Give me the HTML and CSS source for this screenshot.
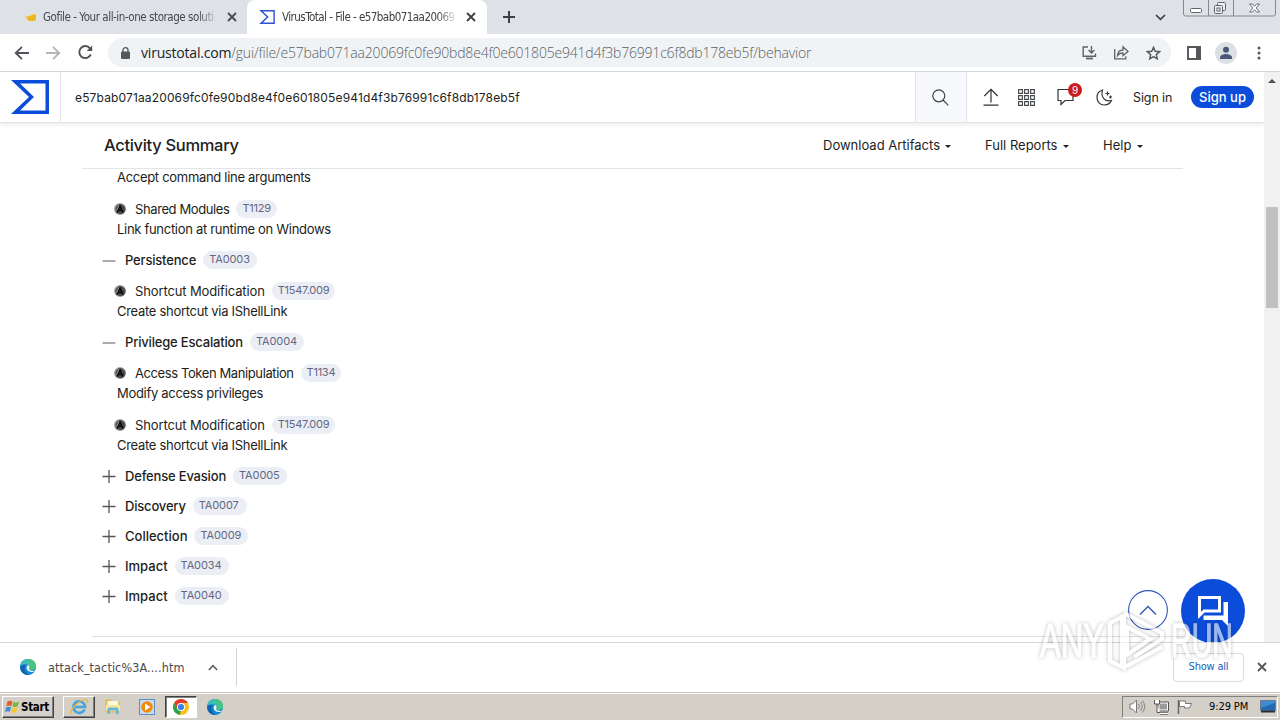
FILE: index.html
```html
<!DOCTYPE html>
<html lang="en">
<head>
<meta charset="utf-8">
<title>VirusTotal - File</title>
<link rel="stylesheet" href="styles.css">
</head>
<body>
<svg width="0" height="0" class="defs">
  <symbol id="sigma" viewBox="0 0 38 34"><path d="M0 0H38V34H0L18 17ZM9 3.5L23 17L9 30.5H34.5V3.5Z" fill="currentColor" fill-rule="evenodd"/></symbol>
  <symbol id="attck" viewBox="0 0 12 12"><circle cx="6" cy="6" r="6" fill="#a5a5a5"/><circle cx="6.400" cy="6.200" r="5" fill="#4c4c4c"/><path d="M3 9.5L6 3l3 6.5M4.5 7.5h3.500" fill="none" stroke="#0b0b0b" stroke-width="1.700"/><path d="M2.400 8L5 2.500" stroke="#b5b5b5" stroke-width=".8"/></symbol>
  <symbol id="plus" viewBox="0 0 14 14"><path d="M.5 7.500h13M7 1v13" stroke="#555" stroke-width="1.300"/></symbol>
  <symbol id="minus" viewBox="0 0 14 14"><path d="M.5 8h13" stroke="#888" stroke-width="1.400"/></symbol>
  <symbol id="x" viewBox="0 0 10 10"><path d="M1 1l8 8M9 1L1 9" stroke="currentColor" stroke-width="1.800"/></symbol>
  <symbol id="edge" viewBox="0 0 16 16"><circle cx="8" cy="8" r="8" fill="#1687d2"/><path d="M.3 7C1 2.500 4 0 8 0c5 0 8 3.700 8 7 0 3-2.500 4-4.500 4-1.500 0-2.500-.6-2.200-1.300.8-1 .6-3.700-2.500-4.200C4 5 1.500 6 .3 7Z" fill="#3bbfb4"/><path d="M7 0c5-.5 9 3 9 7 0 3-2.500 4-4.500 4-1.500 0-2.500-.6-2.200-1.300 1.500-2.500.5-6.200-2.300-9.700Z" fill="#52c46f" opacity=".75"/><path d="M6 6.500C3.500 8.500 4.500 14 9 15.900 4 16.500 0 13 .2 8 1.500 5.500 4.500 5.200 6 6.500Z" fill="#1264b0"/><path d="M8.300 6c-2.800 1-2.400 6 2.700 7 2 .3 3.500-.5 4.400-1.200-1.800.3-6.400.2-6.400-1.800 1-1 .6-3-.7-4Z" fill="#eaf7fb"/></symbol>
</svg>
<div class="screen">
  <div class="tabstrip">
    <div class="tab">
      <svg class="gofile" width="12" height="10" viewBox="0 0 12 10"><path d="M1 5L10 2l1 .8V8L9 9H4L2 7Z" fill="#edb71f"/><path d="M0 4.500l2-.4M5 3.200l5-1.500" stroke="#f5d77a"/></svg>
      <span class="tabtitle t1">Gofile - Your all-in-one storage soluti</span>
      <svg width="10" height="10" class="tabx"><use href="#x"/></svg>
    </div>
    <div class="tab active">
      <svg width="16" height="14" class="vt"><use href="#sigma"/></svg>
      <span class="tabtitle t2">VirusTotal - File - e57bab071aa20069</span>
      <svg width="10" height="10" class="tabx"><use href="#x"/></svg>
    </div>
    <svg class="newtab" width="12" height="12" viewBox="0 0 12 12"><path d="M0 6h12M6 0v12" stroke="#3c4043" stroke-width="2"/></svg>
    <svg class="tabdown" width="11" height="7" viewBox="0 0 11 7"><path d="M1 1l4.500 4.300L10 1" fill="none" stroke="#3c4043" stroke-width="1.700"/></svg>
    <svg class="winbtns" width="93" height="17" viewBox="0 0 93 17"><path d="M.5 0V14q0 2 2 2H90.500q2 0 2-2V0M25.500 0V16M50.500 0V16" fill="none" stroke="#85898f"/><rect x="7.500" y="8.500" width="11" height="4" rx="1" fill="#fff" stroke="#60646a"/><g fill="#eef0f3" stroke="#60646a"><rect x="34.500" y="2.500" width="8" height="8" rx="1"/><rect x="31.500" y="5.500" width="8" height="8" rx="1"/><rect x="34" y="8" width="3" height="3"/></g><path d="M66.500 4h3l2 2.300 2-2.300h3l-3.300 4 3.300 4h-3l-2-2.300-2 2.300h-3l3.300-4Z" fill="#fff" stroke="#60646a" stroke-width=".9"/></svg>
  </div>
  <div class="toolbar">
    <svg class="back" width="15" height="14" viewBox="0 0 15 14"><path d="M15 7H1.500M8 .8L1.700 7 8 13.200" fill="none" stroke="#4f5357" stroke-width="1.800"/></svg>
    <svg class="fwd" width="15" height="14" viewBox="0 0 15 14"><path d="M0 7h13.500M7 .8L13.300 7 7 13.200" fill="none" stroke="#b4b6b9" stroke-width="1.800"/></svg>
    <svg class="reload" width="15" height="15" viewBox="0 0 15 15"><path d="M12.800 9.500A6 6 0 1 1 12 3.300L13 4.600" fill="none" stroke="#4f5357" stroke-width="1.900"/><path d="M14.200.5V6H8.700Z" fill="#4f5357"/></svg>
    <div class="omnibox">
      <svg class="lock" width="9" height="12" viewBox="0 0 9 12"><rect y="4.500" width="9" height="7.500" rx="1" fill="#54585c"/><path d="M2 5V3a2.500 2.300 0 0 1 5 0V5" fill="none" stroke="#54585c" stroke-width="1.300"/></svg>
      <span class="url"><b>virustotal.com</b>/gui/file/e57bab071aa20069fc0fe90bd8e4f0e601805e941d4f3b76991c6f8db178eb5f/behavior</span>
      <svg class="install" width="15" height="14" viewBox="0 0 15 14"><g fill="none" stroke="#5f6368" stroke-width="1.400"><path d="M6 1H1.200v9.300h12.300V7.500M9.500 0v6.500M6.500 4l3 3 3-3"/></g><path d="M4 12.500h7" stroke="#5f6368" stroke-width="1.800"/></svg>
      <svg class="share" width="15" height="15" viewBox="0 0 15 15"><g fill="none" stroke="#5f6368" stroke-width="1.300"><path d="M.7 4v9.800h11.100v-2.500M3.500 10.500c.4-4 2.500-5.500 5.500-5.500V1.800L14 6.500 9 10.700V8C6.500 8 4.800 8.700 3.500 10.500Z"/></g></svg>
      <svg class="star" width="15" height="14" viewBox="0 0 15 14"><path d="M7.500 1.300l1.700 4 4.400.4-3.300 2.900 1 4.300-3.800-2.300-3.800 2.300 1-4.300L1.400 5.700l4.400-.4Z" fill="none" stroke="#54585c" stroke-width="1.400"/></svg>
    </div>
    <svg class="side" width="14" height="14" viewBox="0 0 14 14"><path d="M1 1h12v12H1Z" fill="none" stroke="#54585c" stroke-width="1.900"/><path d="M9 0h5v14H9Z" fill="#54585c"/></svg>
    <svg class="avatar" width="22" height="22" viewBox="0 0 22 22"><circle cx="11" cy="11" r="11" fill="#dce0e5"/><circle cx="11" cy="7.800" r="3" fill="#485875"/><path d="M5 17v-1.500c0-2.500 4-3.500 6-3.500s6 1 6 3.500V17Z" fill="#485875"/></svg>
    <svg class="dots" width="4" height="14" viewBox="0 0 4 14"><g fill="#54585c"><circle cx="2" cy="2" r="1.500"/><circle cx="2" cy="7" r="1.500"/><circle cx="2" cy="12" r="1.500"/></g></svg>
  </div>
  <div class="viewport">
    <div class="page">
      <div class="vthead">
        <div class="logo"><svg width="38" height="34" viewBox="0 0 38 34"><use href="#sigma"/></svg></div>
        <div class="query">e57bab071aa20069fc0fe90bd8e4f0e601805e941d4f3b76991c6f8db178eb5f</div>
        <div class="search"><svg width="17" height="17" viewBox="0 0 17 17"><circle cx="6.800" cy="6.800" r="6" fill="none" stroke="#3f4245" stroke-width="1.200"/><path d="M11 11l5.300 5.300" stroke="#3f4245" stroke-width="1.200"/></svg></div>
        <svg class="upload" width="16" height="18" viewBox="0 0 16 18"><path d="M8 14.500V1.500M1.300 8L8 1.300 14.700 8M.5 17.200h15" fill="none" stroke="#2f3235" stroke-width="1.200"/></svg>
        <svg class="grid" width="17" height="17" viewBox="0 0 17 17"><g fill="none" stroke="#44474a" stroke-width="1.100"><path d="M.6.600h3.800v3.800H.6ZM6.600.600h3.800v3.800H6.600ZM12.600.600h3.800v3.800h-3.800ZM.6 6.600h3.800v3.800H.6ZM6.600 6.600h3.800v3.800H6.600ZM12.600 6.600h3.800v3.800h-3.800ZM.6 12.600h3.800v3.800H.6ZM6.600 12.600h3.800v3.800H6.600ZM12.600 12.600h3.800v3.800h-3.800Z"/></g></svg>
        <div class="chat"><svg width="18" height="18" viewBox="0 0 18 18"><path d="M1 1.500h15v11H8L4 16.500v-4H1Z" fill="none" stroke="#333639" stroke-width="1.200"/></svg><span class="count">9</span></div>
        <svg class="moon" width="17" height="17" viewBox="0 0 17 17"><path d="M6.500 1C3 2 1 4.800 1 8.500 1 13 4 16 8.200 16c3.300 0 6-1.500 7.200-4.500C9 13.500 4.500 8 6.500 1Z" fill="none" stroke="#333639" stroke-width="1.200"/><path d="M11.500 2.500v4M9.500 4.500h4M14.500 6.500v3M13 8h3" stroke="#333639" stroke-width="1.200"/></svg>
        <span class="signin">Sign in</span>
        <span class="signup">Sign up</span>
      </div>
      <div class="summary">
        <span class="title">Activity Summary</span>
        <span class="menu m1">Download Artifacts</span><i class="caret"></i>
        <span class="menu m2">Full Reports</span><i class="caret"></i>
        <span class="menu m3">Help</span><i class="caret"></i>
      </div>
      <div class="list">
        <div class="desc">Accept command line arguments</div>
        <div class="tech gap"><svg width="12" height="12"><use href="#attck"/></svg><span class="tight">Shared Modules</span><em>T1129</em></div>
        <div class="desc">Link function at runtime on Windows</div>
        <div class="tactic after"><svg width="14" height="14"><use href="#minus"/></svg><span>Persistence</span><em>TA0003</em></div>
        <div class="tech"><svg width="12" height="12"><use href="#attck"/></svg><span>Shortcut Modification</span><em>T1547.009</em></div>
        <div class="desc">Create shortcut via IShellLink</div>
        <div class="tactic after"><svg width="14" height="14"><use href="#minus"/></svg><span>Privilege Escalation</span><em>TA0004</em></div>
        <div class="tech"><svg width="12" height="12"><use href="#attck"/></svg><span class="tight">Access Token Manipulation</span><em>T1134</em></div>
        <div class="desc">Modify access privileges</div>
        <div class="tech gap"><svg width="12" height="12"><use href="#attck"/></svg><span>Shortcut Modification</span><em>T1547.009</em></div>
        <div class="desc">Create shortcut via IShellLink</div>
        <div class="tactic after"><svg width="14" height="14"><use href="#plus"/></svg><span>Defense Evasion</span><em>TA0005</em></div>
        <div class="tactic"><svg width="14" height="14"><use href="#plus"/></svg><span>Discovery</span><em>TA0007</em></div>
        <div class="tactic"><svg width="14" height="14"><use href="#plus"/></svg><span class="wide">Collection</span><em>TA0009</em></div>
        <div class="tactic"><svg width="14" height="14"><use href="#plus"/></svg><span class="wide">Impact</span><em>TA0034</em></div>
        <div class="tactic"><svg width="14" height="14"><use href="#plus"/></svg><span class="wide">Impact</span><em>TA0040</em></div>
      </div>
      <div class="rule"></div>
      <svg class="totop" width="40" height="40" viewBox="0 0 40 40"><circle cx="20" cy="20" r="19.400" fill="#fff" stroke="#3158b5" stroke-width="1.100"/><path d="M12 24.500l8-8 8 8" fill="none" stroke="#3158b5" stroke-width="1.400"/></svg>
      <svg class="feedback" width="64" height="64" viewBox="0 0 64 64"><circle cx="32" cy="32" r="32" fill="#0b4dda"/><path d="M18.500 18.500h20v13.500H23l-4.500 4.500Z" fill="none" stroke="#fff" stroke-width="3"/><path d="M42.500 23h4.500v24l-6-6H22.500v-4.500h20Z" fill="#fff"/></svg>
    </div>
    <div class="scrollbar"><i class="up"></i><i class="thumb"></i></div>
  </div>
  <div class="downloads">
    <svg class="dledge" width="16" height="16"><use href="#edge"/></svg>
    <span class="dlname">attack_tactic%3A....htm</span>
    <svg class="dlup" width="10" height="7" viewBox="0 0 10 7"><path d="M.8 6L5 1.700 9.200 6" fill="none" stroke="#5f6368" stroke-width="1.700"/></svg>
    <i class="dlsep"></i>
    <span class="showall">Show all</span>
    <svg class="dlx" width="10" height="10"><use href="#x"/></svg>
  </div>
  <div class="taskbar">
    <div class="start"><svg width="15" height="14" viewBox="0 0 15 14"><path d="M2.500 1.500Q5 0 7.500 1.500L6.500 6Q4 5 1.300 6.300Z" fill="#e8582b"/><path d="M8.500 2q3 1 5.500-.5L12.800 6.300Q10 7.500 7.400 6.500Z" fill="#76b83a"/><path d="M1 7.500q2.700-1.300 5-.3L5 11.700Q2.500 10.500 0 12Z" fill="#3f8ddb"/><path d="M7.200 7.500q2.600 1 5.300 0l-1.200 4.700q-2.500 1.300-5.100 0Z" fill="#f7c531"/></svg><span>Start</span></div>
    <div class="task ie"><svg width="18" height="18" viewBox="0 0 18 18"><path d="M14.500 11.500A5.800 5.800 0 1 1 15 9H4" fill="none" stroke="#41a5e0" stroke-width="2.600"/><path d="M1 16C-1 11 13-1 17 2c.7.600.4 2-.3 3.200" fill="none" stroke="#e9b83c" stroke-width="1.400"/></svg></div>
    <svg class="folder" width="16" height="17" viewBox="0 0 16 17"><path d="M1 2h5l1 2h7v10H1Z" fill="#f2d577" stroke="#d3af4c" stroke-width=".8"/><path d="M3 3h10v4H3Z" fill="#fff8da"/><path d="M1 7h14v6H1Z" fill="#f8e69d"/><path d="M2.500 16v-5q0-1.500 2-1.500h7q2 0 2 1.500v5h-2.500v-3.500H5V16Z" fill="#67b5d9"/></svg>
    <svg class="wmp" width="16" height="16" viewBox="0 0 16 16"><rect x=".5" y=".5" width="15" height="15" fill="#c7dcf1" stroke="#5c8fc5"/><circle cx="8" cy="8" r="5.800" fill="#f38a10"/><path d="M6 4.500v7l5.500-3.500Z" fill="#fff"/></svg>
    <div class="task on"><svg width="16" height="16" viewBox="0 0 16 16"><circle cx="8" cy="8" r="8" fill="#fbc116"/><path d="M1.100 4A8 8 0 0 1 14.900 4H8L4.500 10Z" fill="#e33b2e"/><path d="M1.100 4L4.500 10 8 12 6.500 15.900A8 8 0 0 1 1.100 4Z" fill="#2da14c"/><circle cx="8" cy="8" r="4" fill="#fff"/><circle cx="8" cy="8" r="3.100" fill="#3f7fe8"/></svg></div>
    <svg class="tbedge" width="16" height="16"><use href="#edge"/></svg>
    <div class="tray">
      <svg class="vol" width="17" height="15" viewBox="0 0 17 15"><path d="M1 5h2.500L7.500 1v13L3.500 10H1Z" fill="#fff" stroke="#777"/><path d="M9.500 5q2 2.500 0 5M11.500 3q3.500 4.500 0 9M13.500 1.500q4.500 6 0 12" fill="none" stroke="#858585"/></svg>
      <svg class="net" width="16" height="16" viewBox="0 0 16 16"><path d="M5 3h10.500v9H5Z" fill="#fff" stroke="#555"/><path d="M6.500 4.500h7.500v6H6.500Z" fill="#9a9a9a"/><path d="M7 14.500h8" stroke="#fff" stroke-width="2"/><path d="M7 13.500h8M7 15.500h8" stroke="#666" stroke-width=".8"/><path d="M1.500 1v4h5V1M4 5v8.500H7" fill="#fff" stroke="#555"/></svg>
      <svg class="flag" width="16" height="16" viewBox="0 0 16 16"><path d="M1.500 1v14" stroke="#666" stroke-width="1.500"/><path d="M2.500 2h6v2.500h6l-2 4.500h-5V7.500h-5Z" fill="#fff" stroke="#777"/></svg>
      <span class="clock">9:29 PM</span>
      <svg class="desk" width="16" height="13" viewBox="0 0 16 13"><path d="M.5.500h15v10H.5Z" fill="#2469b3" stroke="#6d7c8c"/><path d="M1 1h14v2L1 8Z" fill="#3f8bd1"/><path d="M1 11.500h14" stroke="#242d3c" stroke-width="2"/></svg>
    </div>
  </div>
  <svg class="watermark" width="210" height="66" viewBox="0 0 210 66">
    <g class="mark"><text x="4" y="50" textLength="64" lengthAdjust="spacingAndGlyphs">ANY</text><text x="135" y="50" textLength="62" lengthAdjust="spacingAndGlyphs">RUN</text>
    <path d="M88 6L126 26V32L98 50M86 8V56L91 59L126 40M74 16V54L88 61V9ZM91 20V48L114 32Z" fill="none" stroke-width="4"/></g>
  </svg>
</div>
</body>
</html>
```

FILE: styles.css
```css
* { box-sizing: border-box; }
body { margin: 0; overflow: hidden; background: #fff; }
svg { display: block; flex: none; }
.defs { position: absolute; }
.screen { position: relative; width: 1280px; height: 720px; display: flex; flex-direction: column; overflow: hidden; font-family: "Inter", sans-serif; color: #1d1e20; }
span { white-space: nowrap; }

.tabstrip { height: 34px; flex: none; display: flex; background: #dee1e6; font-family: "DejaVu Sans Condensed", "DejaVu Sans", sans-serif; }
.tab { width: 247px; height: 34px; display: flex; align-items: center; color: #46494d; }
.tab.active { width: 240px; background: #fff; border-radius: 8px 8px 0 0; color: #3c4043; }
.gofile { margin-left: 25px; }
.tabtitle { font-size: 11.500px; width: 176px; overflow: hidden; -webkit-mask-image: linear-gradient(90deg, #000 88%, transparent); mask-image: linear-gradient(90deg, #000 88%, transparent); }
.t1 { margin-left: 6px; letter-spacing: -.45px; }
.t2 { margin-left: 7px; letter-spacing: -.54px; }
.tabx { margin-left: 8px; }
.vt { color: #2c55d4; margin-left: 12px; }
.newtab { margin: 11px 0 0 16px; }
.tabdown { margin: 14px 0 0 auto; }
.winbtns { margin: 0 4px 0 17px; }

.toolbar { height: 38px; flex: none; display: flex; align-items: center; background: #fff; border-bottom: 1px solid #d5d7da; }
.back { margin-left: 14px; }
.fwd { margin-left: 17px; }
.reload { margin-left: 17px; }
.omnibox { width: 1063px; height: 29px; margin-left: 15px; border-radius: 15px; background: #f0f3f5; display: flex; align-items: center; }
.lock { margin-left: 13px; }
.url { width: 941px; margin-left: 11px; font-family: "Open Sans", "Noto Sans", sans-serif; font-size: 14px; letter-spacing: -.2px; font-weight: 300; color: #5b5f64; }
.url b { font-weight: 400; color: #202124; }
.share { margin-left: 17px; }
.star { margin-left: 17px; }
.side { margin-left: 16px; }
.avatar { margin-left: 14px; }
.dots { margin-left: 20px; }

.viewport { height: 570px; flex: none; display: flex; }
.page { position: relative; width: 1264px; height: 570px; overflow: hidden; }
.vthead { position: relative; height: 51px; display: flex; align-items: center; border-bottom: 1px solid #e3e5e8; box-shadow: 0 2px 4px rgba(0,0,0,.08); font-size: 13px; }
.logo { width: 61px; height: 50px; padding: 8px 0 0 11px; border-right: 1px solid #e2e5ec; color: #0b4dda; }
.query { width: 854px; padding-left: 14px; font-size: 12px; letter-spacing: .145px; }
.search { width: 52px; height: 50px; background: #f7f9fd; border: solid #dfe3ec; border-width: 0 1px; padding: 17px 0 0 16px; }
.upload { margin-left: 16px; }
.grid { margin-left: 19px; }
.chat { position: relative; margin-left: 22px; }
.count { position: absolute; left: 11px; top: -5px; width: 14px; height: 14px; border-radius: 50%; background: #ca1c1c; color: #fff; font-size: 10px; line-height: 14px; text-align: center; }
.moon { margin-left: 21px; }
.signin { margin-left: 20px; width: 39px; font-size: 12.500px; letter-spacing: -.1px; }
.signup { margin-left: 19px; width: 63px; height: 22px; line-height: 22px; border-radius: 11px; background: #0b4dda; color: #fff; text-align: center; font-weight: 500; }

.summary { position: relative; margin: 0 81px 0 82px; height: 46px; padding-bottom: 1px; display: flex; align-items: center; border-bottom: 1px solid #e2e4e6; }
.title { margin-left: 22px; width: 719px; font-size: 16.500px; font-weight: 500; letter-spacing: -.32px; }
.menu { font-size: 13px; }
.m1 { width: 117px; }
.m2 { margin-left: 34px; width: 73px; }
.m3 { margin-left: 34px; width: 29px; }
.caret { width: 6px; height: 3px; margin: 2px 0 0 5px; border: solid transparent; border-width: 3px 3px 0; border-top-color: #222; }

.list { margin-top: -1.500px; padding-left: 102px; font-size: 13px; }
.desc { height: 20px; line-height: 19px; padding-left: 15px; letter-spacing: -.3px; }
.tech { height: 20px; margin-top: 6.500px; padding: 0 0 1px 12px; display: flex; align-items: center; }
.tech.gap { margin-top: 12px; }
.tech span { margin-left: 9px; letter-spacing: -.13px; }
.tech .tight { letter-spacing: -.4px; }
.tactic { height: 30px; display: flex; align-items: center; }
.tactic.after { margin-top: 5.500px; }
.tactic span { margin-left: 9px; font-weight: 500; letter-spacing: -.18px; }
.tactic .wide { letter-spacing: 0; }
.list em { margin-left: 7px; height: 18px; line-height: 17px; padding: 0 6px; border-radius: 9px; background: #eceef6; color: #626783; font-size: 11px; font-style: normal; letter-spacing: -.1px; }
.tech em { letter-spacing: -.25px; }
.tactic em { width: 54px; }
.rule { margin: 25px 81px 0 92px; border-top: 1px solid #dedfe1; }
.totop { position: absolute; left: 1128px; top: 518px; }
.feedback { position: absolute; left: 1181px; top: 507px; }
.scrollbar { width: 16px; background: #f1f1f1; display: flex; flex-direction: column; align-items: center; }
.up { width: 8px; height: 4px; margin-top: 7px; border: solid transparent; border-width: 0 4px 4px; border-bottom-color: #505050; }
.thumb { width: 12px; height: 101px; margin-top: 124px; background: #c1c1c1; }

.downloads { height: 50px; flex: none; background: #fff; border-top: 1px solid #d5d7da; padding-bottom: 1px; display: flex; align-items: center; font-family: "DejaVu Sans Condensed", "DejaVu Sans", sans-serif; }
.dledge { margin-left: 20px; }
.dlname { margin-left: 12px; width: 135px; font-size: 12.500px; letter-spacing: .1px; color: #46494d; }
.dlup { margin-left: 25px; }
.dlsep { height: 38px; margin-left: 18px; border-left: 1px solid #d0d2d5; }
.showall { width: 71px; height: 29px; margin-left: auto; border: 1px solid #dadce0; border-radius: 4px; line-height: 26px; text-align: center; font-size: 11px; letter-spacing: -.2px; color: #2162bc; }
.dlx { margin: 0 13px; color: #54585c; }

.taskbar { height: 28px; flex: none; display: flex; align-items: center; background: #d4d0c8; border-top: 1px solid #c9c6c0; box-shadow: inset 0 1px #fff; }
.start { width: 52px; height: 22px; margin-left: 2px; display: flex; align-items: center; border: 1px solid; border-color: #fff #404040 #404040 #fff; box-shadow: inset -1px -1px #808080; padding-left: 2px; font: bold 11.500px "DejaVu Sans Condensed", "DejaVu Sans", sans-serif; color: #000; }
.start span { margin-left: 1px; letter-spacing: -.3px; }
.task { width: 32px; height: 22px; display: flex; align-items: center; justify-content: center; border: 1px solid; border-color: #fff #404040 #404040 #fff; box-shadow: inset -1px -1px #808080; }
.ie { margin-left: 9px; }
.on { margin-left: 10px; background: #fff; border-color: #404040 #fff #fff #404040; box-shadow: inset 1px 1px #808080; }
.folder { margin-left: 10px; }
.wmp { margin-left: 18px; }
.tbedge { margin-left: 10px; }
.tray { width: 156px; height: 22px; margin: 0 2px 0 auto; border: 1px solid; border-color: #808080 #fff #fff #808080; display: flex; align-items: center; }
.vol { margin-left: 6px; }
.net { margin-left: 7px; }
.flag { margin-left: 8px; }
.clock { width: 41px; margin-left: 16px; font: 11px "DejaVu Sans Condensed", "DejaVu Sans", sans-serif; color: #000; letter-spacing: -.1px; }
.desk { margin-left: 10px; }

.watermark { position: absolute; left: 1036px; top: 607px; overflow: visible; }
.mark { fill: #fff; stroke: #fff; opacity: .6; filter: drop-shadow(0 0 2px rgba(0,0,0,.42)); }
.mark text { font: 48px "Liberation Sans", sans-serif; stroke-width: 1.5px; }
```
